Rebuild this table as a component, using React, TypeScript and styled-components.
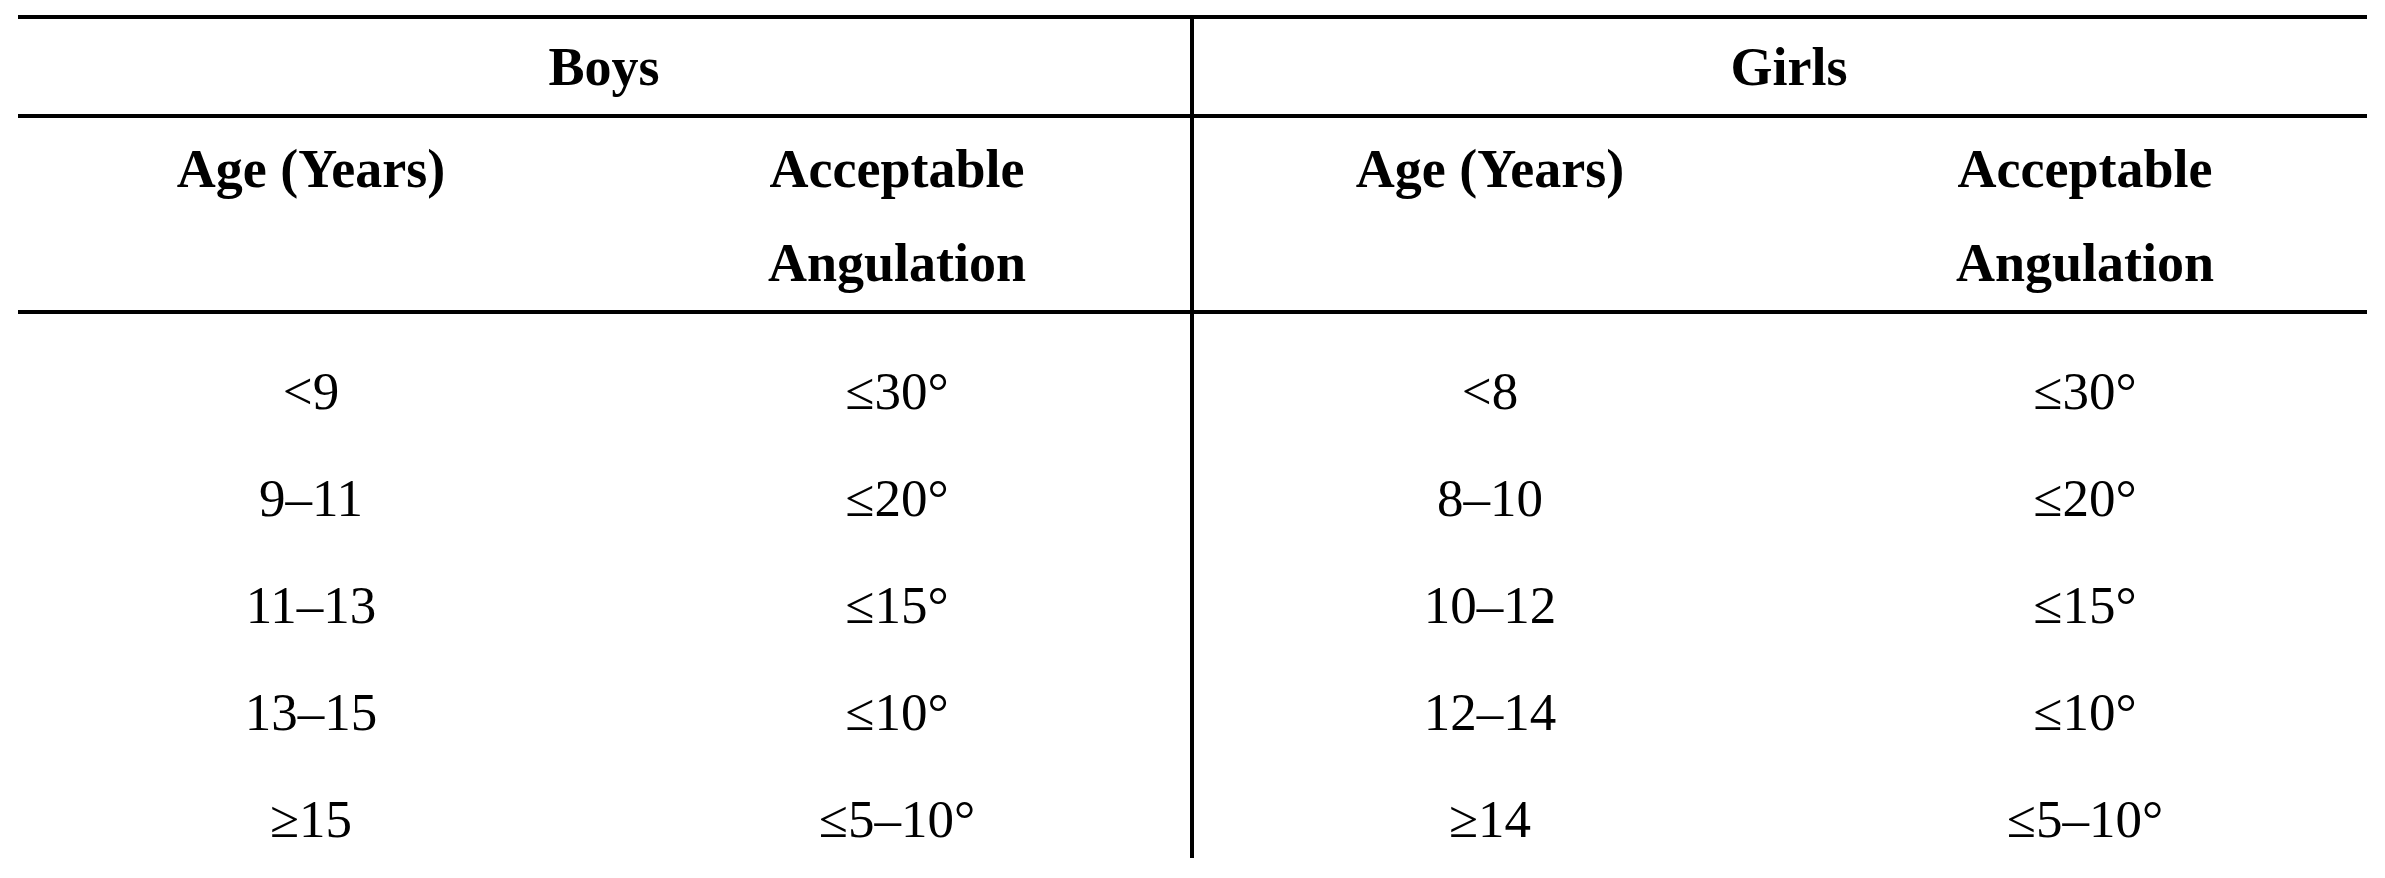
import React from 'react';
import styled, { createGlobalStyle } from 'styled-components';

const GlobalStyle = createGlobalStyle`
  html, body {
    margin: 0;
    padding: 0;
    background: #ffffff;
  }

  body {
    font-family: 'Liberation Serif', 'Times New Roman', serif;
    color: #000000;
  }
`;

const Page = styled.div`
  padding: 15px 0 0 18px;
  width: 2385px;
  height: 878px;
  box-sizing: border-box;
`;

const Table = styled.div`
  display: grid;
  grid-template-columns: 586px 586px 596px 598px;
  width: 2366px;
`;

const Rule = styled.div`
  grid-column: 1 / -1;
  width: 2349px;
  height: 4px;
  background: #000000;
`;

const Cell = styled.div<{ $divider?: boolean }>`
  box-sizing: border-box;
  text-align: center;
  font-size: 53px;
  border-left: ${(p) => (p.$divider ? '4px solid #000000' : 'none')};
`;

const GroupCell = styled(Cell)`
  grid-column: span 2;
  font-weight: 700;
  font-size: 54px;
  line-height: 93px;
  padding-top: 2px;
`;

const HeadCell = styled(Cell)`
  font-weight: 700;
  font-size: 54px;
  line-height: 93.5px;
  padding-top: 5px;
`;

// last row is cut short so the divider stops just under the text
const BodyCell = styled(Cell)<{ $first?: boolean; $last?: boolean }>`
  font-weight: 400;
  line-height: 107px;
  padding-top: ${(p) => (p.$first ? '24px' : '0')};
  height: ${(p) => (p.$last ? '92px' : 'auto')};
`;

const rows = [
  ['<9', '≤30°', '<8', '≤30°'],
  ['9–11', '≤20°', '8–10', '≤20°'],
  ['11–13', '≤15°', '10–12', '≤15°'],
  ['13–15', '≤10°', '12–14', '≤10°'],
  ['≥15', '≤5–10°', '≥14', '≤5–10°'],
];

const App = () => {
  return (
    <>
      <GlobalStyle />
      <Page>
        <Table>
          <Rule />
          <GroupCell>Boys</GroupCell>
          <GroupCell $divider>Girls</GroupCell>
          <Rule />
          <HeadCell>Age (Years)</HeadCell>
          <HeadCell>
            Acceptable
            <br />
            Angulation
          </HeadCell>
          <HeadCell $divider>Age (Years)</HeadCell>
          <HeadCell>
            Acceptable
            <br />
            Angulation
          </HeadCell>
          <Rule />
          {rows.map((row, i) =>
            row.map((value, j) => (
              <BodyCell
                key={`${i}-${j}`}
                $divider={j === 2}
                $first={i === 0}
                $last={i === rows.length - 1}
              >
                {value}
              </BodyCell>
            ))
          )}
        </Table>
      </Page>
    </>
  );
};

export default App;
